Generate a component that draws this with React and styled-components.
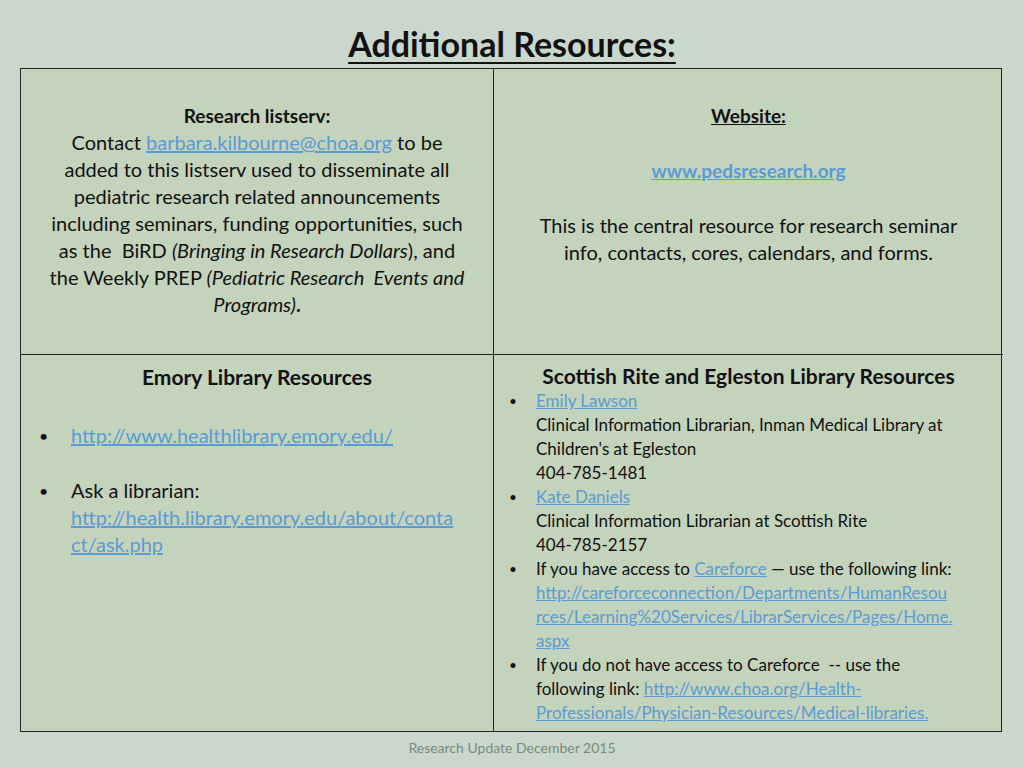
import React from "react";
import styled, { createGlobalStyle } from "styled-components";

const G = createGlobalStyle`
  html,body{margin:0;padding:0;background:#c9d7cc;}
  body{font-family:Lato,"Open Sans",sans-serif;color:#111;}
`;
const Page = styled.div`width:1024px;height:768px;display:flex;flex-direction:column;align-items:center;`;
const Title = styled.h1`margin:22px 0 0;font-size:34px;font-weight:700;text-decoration:underline;text-underline-offset:5px;text-decoration-thickness:2px;line-height:44px;`;
const Table = styled.div`
  margin-top:2px;width:982px;display:grid;grid-template-columns:473px 509px;grid-template-rows:286px 376px;
  border:1.5px solid #222;box-sizing:border-box;background:#c4d3bc;margin-left:-2px;
`;
const Cell = styled.div`
  border-right:${p=>p.$r?"1.5px solid #222":"none"};
  border-bottom:${p=>p.$b?"1.5px solid #222":"none"};
  padding:${p=>p.$pad};text-align:${p=>p.$center?"center":"left"};
  font-size:${p=>p.$fs||20}px;line-height:${p=>p.$lh||27}px;box-sizing:border-box;white-space:nowrap;
`;
const A = styled.span`color:#5b9bd5;text-decoration:underline;`;
const H = styled.div`font-weight:700;font-size:${p=>p.$fs||19}px;line-height:${p=>p.$lh||27}px;${p=>p.$u&&"text-decoration:underline;"}text-align:center;`;
const P = styled.p`margin:${p=>p.$m||0};`;
const List = styled.ul`list-style:none;margin:${p=>p.$m||0};padding:0;`;
const Li = styled.li`display:flex;margin:${p=>p.$m||0};`;
const Bullet = styled.span`flex:0 0 ${p=>p.$w}px;padding-left:${p=>p.$pl}px;box-sizing:border-box;font-size:0.8em;`;
const Footer = styled.div`margin-top:7px;font-size:14px;color:#7a8a80;`;

export default function App(){
  return <Page><G/>
    <Title>Additional Resources:</Title>
    <Table>
      <Cell $r $b $center $pad="33px 6px 0">
        <H>Research listserv:</H>
        Contact <A>barbara.kilbourne@choa.org</A> to be<br/>added to this listserv used to disseminate all<br/>pediatric research related announcements<br/>including seminars, funding opportunities, such<br/>as the&nbsp; BiRD <i>(Bringing in Research Dollars</i>), and<br/>the Weekly PREP <i>(Pediatric Research&nbsp; Events and<br/>Programs)</i><b>.</b>
      </Cell>
      <Cell $b $center $pad="33px 10px 0">
        <H $u>Website:</H>
        <P $m="28px 0 0"><A style={{fontWeight:700,fontSize:19}}>www.pedsresearch.org</A></P>
        <P $m="28px 0 0">This is the central resource for research seminar<br/>info, contacts, cores, calendars, and forms.</P>
      </Cell>
      <Cell $r $pad="8px 8px 0">
        <H $fs={21}>Emory Library Resources</H>
        <List $m="32px 0 0">
          <Li><Bullet $w={42} $pl={10}>•</Bullet><A>http://www.healthlibrary.emory.edu/</A></Li>
          <Li $m="28px 0 0"><Bullet $w={42} $pl={10}>•</Bullet><span>Ask a librarian:<br/><A>http://health.library.emory.edu/about/conta<br/>ct/ask.php</A></span></Li>
        </List>
      </Cell>
      <Cell $fs={17} $lh={24} $pad="8px 10px 0">
        <H $fs={21} $lh={26}>Scottish Rite and Egleston Library Resources</H>
        <List>
          <Li><Bullet $w={32} $pl={5}>•</Bullet><span><A>Emily Lawson</A><br/>Clinical Information Librarian, Inman Medical Library at<br/>Children's at Egleston<br/>404-785-1481</span></Li>
          <Li><Bullet $w={32} $pl={5}>•</Bullet><span><A>Kate Daniels</A><br/>Clinical Information Librarian at Scottish Rite<br/>404-785-2157</span></Li>
          <Li><Bullet $w={32} $pl={5}>•</Bullet><span>If you have access to <A>Careforce</A> — use the following link:<br/><A>http://careforceconnection/Departments/HumanResou<br/>rces/Learning%20Services/LibrarServices/Pages/Home.<br/>aspx</A></span></Li>
          <Li><Bullet $w={32} $pl={5}>•</Bullet><span>If you do not have access to Careforce&nbsp; -- use the<br/>following link: <A>http://www.choa.org/Health-<br/>Professionals/Physician-Resources/Medical-libraries.</A></span></Li>
        </List>
      </Cell>
    </Table>
    <Footer>Research Update December 2015</Footer>
  </Page>;
}
